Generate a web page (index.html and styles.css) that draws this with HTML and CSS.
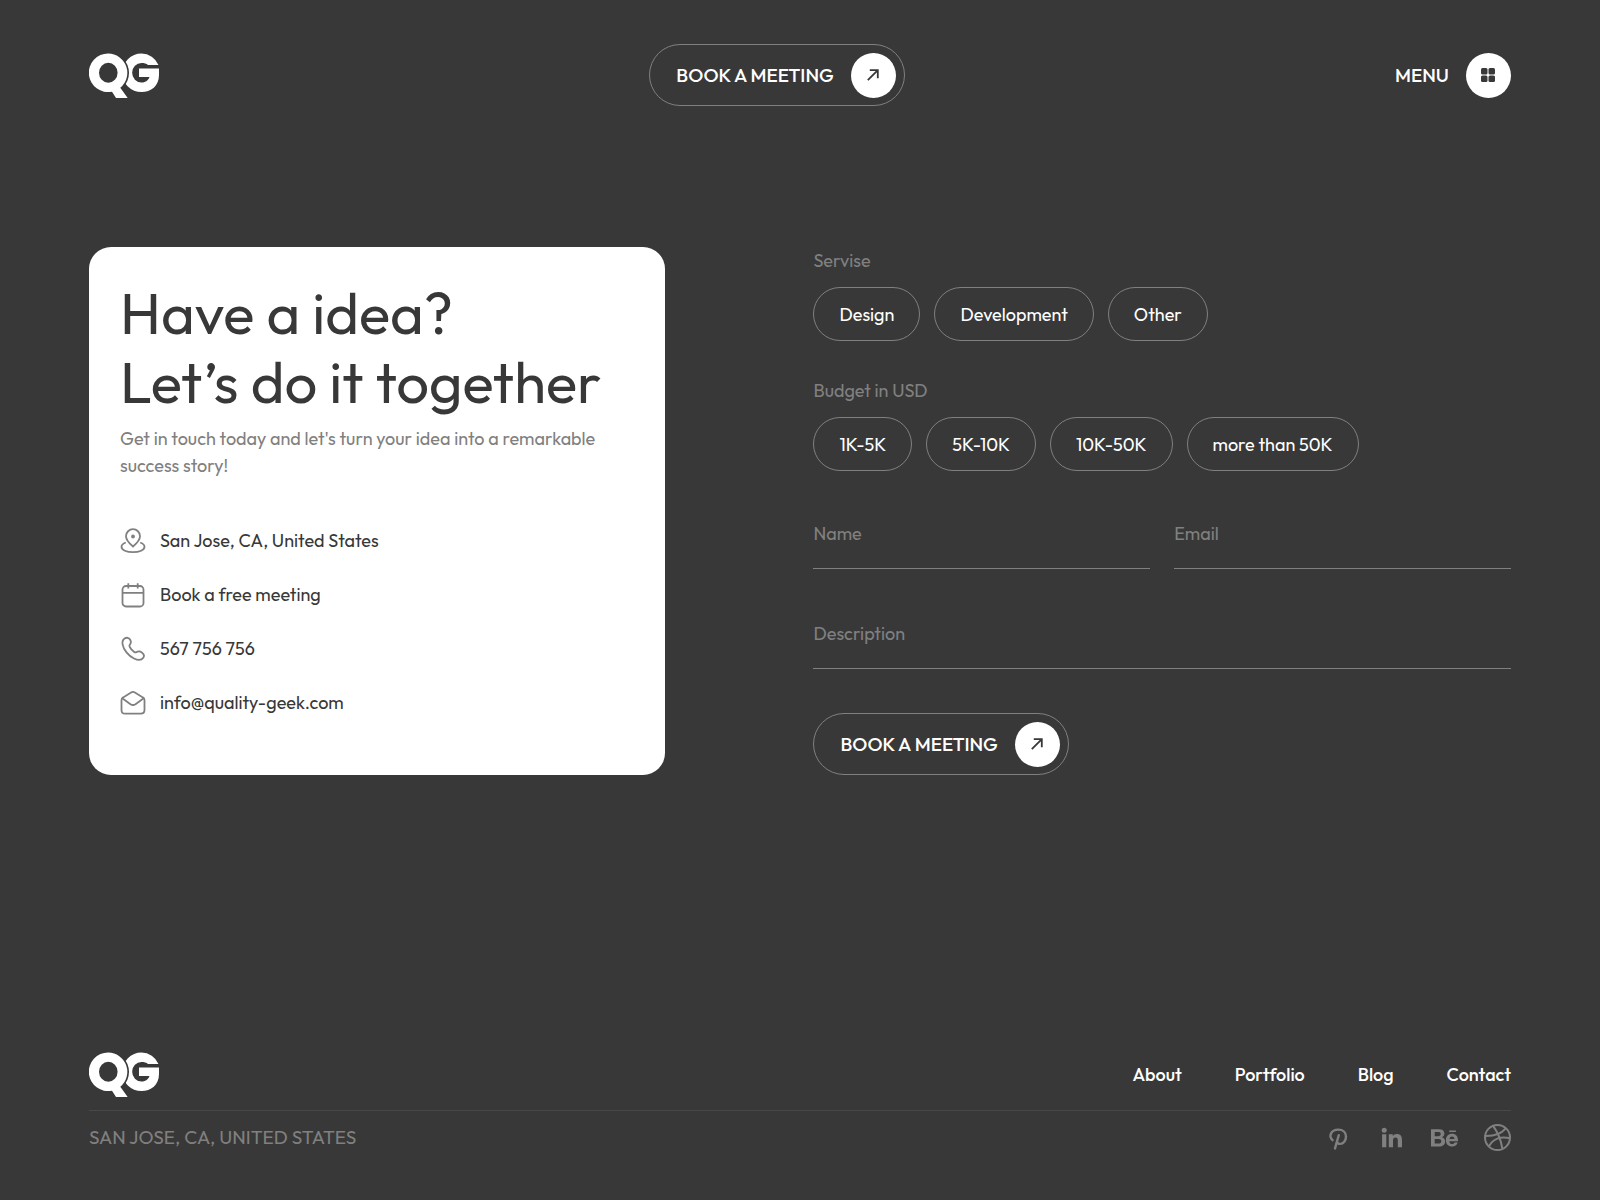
FILE: index.html
```html
<!DOCTYPE html>
<html lang="en">
<head>
<meta charset="utf-8">
<meta name="viewport" content="width=device-width, initial-scale=1">
<title>QG – Contact</title>
<link rel="stylesheet" href="styles.css">
</head>
<body>
<svg class="defs" aria-hidden="true">
  <symbol id="logo" viewBox="0 0 70 45">
    <path fill="#fff" d="M69.500 12A18.600 18.600 0 0 0 52.500.5a19.300 19.300 0 0 0 0 38.600C62 39 70 33 70 22v-6.500H50V24h10.500c-1.500 4-4.500 5.500-8 5.500a9.300 9.700 0 0 1 0-19.500c2.500 0 5 .5 6.500 2z"/>
    <circle cx="19.300" cy="19.800" r="20.700" fill="#383838"/>
    <path fill="#fff" fill-rule="evenodd" d="M19.300.5a19.300 19.300 0 0 1 12 34.200L38.700 45H27l-4-6.300A19.300 19.300 0 1 1 19.300.5zm0 9.300a9.300 10 0 1 0 0 20 9.300 10 0 0 0 0-20z"/>
  </symbol>
  <symbol id="arrow" viewBox="0 0 12 12">
    <path fill="none" stroke="#383838" stroke-width="1.800" d="M.8 11.200 10.600 1.400M2.800 1.200h8v8"/>
  </symbol>
</svg>

<header class="header">
  <a class="logo" href="#" aria-label="QG home"><svg><use href="#logo"/></svg></a>
  <button class="cta" type="button">BOOK A MEETING<span class="disc"><svg class="arrow"><use href="#arrow"/></svg></span></button>
  <button class="menu" type="button">MENU<span class="disc"><svg class="dots" viewBox="0 0 14 14" fill="#383838"><rect width="6.500" height="6.500" rx="1.500"/><rect x="7.500" width="6.500" height="6.500" rx="1.500"/><rect y="7.500" width="6.500" height="6.500" rx="1.500"/><rect x="7.500" y="7.500" width="6.500" height="6.500" rx="1.500"/></svg></span></button>
</header>

<main class="main">
  <section class="card">
    <h1>Have a idea?<br>Let’s do it together</h1>
    <p class="lead">Get in touch today and let's turn your idea into a remarkable success story!</p>
    <ul class="contacts">
      <li><svg viewBox="0 0 26 26"><path d="M13 18.500C9.500 15.500 6 11.800 6 8.200a7 7 0 0 1 14 0c0 3.600-3.500 7.300-7 10.300z"/><circle cx="13" cy="8.500" r="1.900" class="solid"/><path d="M5.800 14.500C3 15.500 1.500 17 1.500 18.800c0 3.200 5.100 5.400 11.500 5.400s11.500-2.200 11.500-5.400c0-1.800-1.500-3.300-4.300-4.300"/></svg><span>San Jose, CA, United States</span></li>
      <li><svg viewBox="0 0 26 26"><rect x="2.500" y="4" width="21" height="20.500" rx="3.500"/><path d="M2.500 10.800h21M8.300 1.200v5.300M17.700 1.200v5.300"/></svg><a href="#book">Book a free meeting</a></li>
      <li><svg viewBox="0 0 26 26"><path d="M4.500 2.600C6.600 1.200 8.900 1.500 10.200 3.700c1.400 2.400.8 3.600-.5 5.100-1 1.100-.4 2 1.500 4.300 2.200 2.500 3.600 4 5 3.200 1.900-1.100 3.500-1.400 5.600.1 2.300 1.600 2.800 3.300 1.500 5.300-1.600 2.400-5 2.900-9.300.8C8.300 19.700 3.500 13.700 2.600 8.400 2.100 5.600 2.600 3.900 4.500 2.600z"/></svg><a href="tel:567756756">567 756 756</a></li>
      <li><svg viewBox="0 0 26 26"><path d="M1.500 10.200c0-1.300.5-2.200 1.600-2.800l8-4.900c1.300-.8 2.500-.8 3.800 0l8 4.900c1.100.6 1.600 1.500 1.600 2.800V20c0 2.500-1.200 3.700-3.700 3.700H5.200c-2.500 0-3.700-1.200-3.700-3.700z"/><path d="m2.300 8.300 8.200 5.900c1.800 1.200 3.200 1.200 5 0l8.200-5.900"/></svg><a href="mailto:info@quality-geek.com">info@quality-geek.com</a></li>
    </ul>
  </section>

  <form class="form" id="book">
    <div class="group" role="group" aria-labelledby="service-label">
      <span class="label" id="service-label">Servise</span>
      <div class="pills">
        <button type="button">Design</button>
        <button type="button">Development</button>
        <button type="button">Other</button>
      </div>
    </div>
    <div class="group" role="group" aria-labelledby="budget-label">
      <span class="label" id="budget-label">Budget in USD</span>
      <div class="pills">
        <button type="button">1K-5K</button>
        <button type="button">5K-10K</button>
        <button type="button">10K-50K</button>
        <button type="button">more than 50K</button>
      </div>
    </div>
    <div class="fields">
      <input type="text" placeholder="Name" aria-label="Name">
      <input type="email" placeholder="Email" aria-label="Email">
      <input class="wide" type="text" placeholder="Description" aria-label="Description">
    </div>
    <button class="cta" type="submit">BOOK A MEETING<span class="disc"><svg class="arrow"><use href="#arrow"/></svg></span></button>
  </form>
</main>

<footer class="footer">
  <div class="footer-top">
    <a class="logo" href="#" aria-label="QG home"><svg><use href="#logo"/></svg></a>
    <nav class="links">
      <a href="#about">About</a>
      <a href="#portfolio">Portfolio</a>
      <a href="#blog">Blog</a>
      <a href="#contact">Contact</a>
    </nav>
  </div>
  <div class="footer-bottom">
    <span class="place">SAN JOSE, CA, UNITED STATES</span>
    <div class="social">
      <a href="#pinterest" aria-label="Pinterest"><svg viewBox="0 0 27 27"><path fill="none" stroke="currentColor" stroke-width="2.400" stroke-linecap="round" d="M7.600 16.200C3.300 12.500 5.800 5.600 13.300 5.600c4.800 0 7.700 2.900 7.700 6.900 0 4.300-2.700 7.400-5.700 7.400-2 0-3.200-1.200-3.300-2.300M13.800 11.200 10 24.400"/></svg></a>
      <a href="#linkedin" aria-label="LinkedIn"><svg viewBox="0 0 27 27" fill="currentColor"><circle cx="6.200" cy="6.200" r="2.500"/><path d="M4.100 10.300h4.200v13H4.100zM10.800 10.300h4v1.800c.8-1.300 2.200-2.100 4.100-2.100 3.700 0 5.100 2.200 5.100 6v7.300h-4.200v-6.700c0-2-.5-3.100-2.200-3.100-1.800 0-2.600 1.200-2.600 3.200v6.600h-4.200z"/></svg></a>
      <a href="#behance" aria-label="Behance"><svg viewBox="0 0 27 27" fill="currentColor" fill-rule="evenodd"><path d="M0 5.200h7.800c3.500 0 5.600 1.400 5.600 4.300 0 1.800-.9 3-2.500 3.700 2.100.6 3.200 2.100 3.200 4.300 0 3.300-2.600 5-6.100 5H0zm3.700 2.900v4.100h3.500c1.600 0 2.500-.7 2.500-2.100s-.9-2-2.500-2zm0 6.800v4.700h3.900c1.700 0 2.700-.8 2.700-2.400s-1-2.300-2.700-2.300zM18.200 6.500h6.700v1.600h-6.700zM27 17.200h-8.700c.1 1.900 1.100 2.800 2.900 2.800 1.300 0 2.100-.6 2.500-1.500h3c-.8 2.700-2.700 4-5.600 4-3.900 0-6.200-2.400-6.200-6.300s2.400-6.400 6.200-6.400c4.100 0 6.100 2.900 5.900 7.400zM18.400 15h5.100c-.3-1.700-1.100-2.500-2.500-2.500-1.500 0-2.400.9-2.600 2.500z"/></svg></a>
      <a href="#dribbble" aria-label="Dribbble"><svg viewBox="0 0 27 27" fill="none" stroke="currentColor" stroke-width="2"><circle cx="13.500" cy="13.500" r="12.500"/><path d="M9 1.900c4.600 6 7.700 13.100 9.300 22.400M1.200 12c8.300.2 15.500-1.500 20.300-7.300M5 22.400C8.700 15 16.500 11.800 25.900 14.300"/></svg></a>
    </div>
  </div>
</footer>
</body>
</html>
```
FILE: styles.css
```css
* { box-sizing: border-box; }

body {
  margin: 0;
  min-height: 100vh;
  display: flex;
  flex-direction: column;
  padding: 44px 89px 49px;
  background: #383838;
  color: #fff;
  font: 400 18px/27px Outfit, Lato, sans-serif;
}

a { color: inherit; text-decoration: none; }
button, input { font: inherit; color: inherit; }
button { background: none; border: 0; cursor: pointer; }
svg { display: block; flex: none; }
.defs { position: absolute; width: 0; height: 0; }

.header {
  display: flex;
  justify-content: space-between;
  align-items: center;
}
.logo svg { width: 70px; height: 45px; }

.cta, .menu {
  display: flex;
  align-items: center;
  gap: 17px;
  font-size: 19px;
  font-weight: 500;
}
.cta {
  height: 62px;
  padding: 0 8px 0 26px;
  border: 1px solid #808080;
  border-radius: 31px;
}
.menu { padding: 0; }
.disc {
  display: grid;
  place-items: center;
  width: 45px;
  height: 45px;
  border-radius: 50%;
  background: #fff;
}
.arrow { width: 12px; height: 12px; }
.dots { width: 14px; height: 14px; }

.main {
  display: grid;
  grid-template-columns: 576fr 697fr;
  gap: 148px;
  margin-top: 141px;
}

.card {
  padding: 31px 31px 58px;
  border-radius: 22px;
  background: #fff;
  color: #383838;
}
h1 {
  margin: 0;
  font-size: 58px;
  font-weight: 400;
  line-height: 69px;
}
.lead { margin: 9px 0 0; color: #808080; }
.contacts {
  display: grid;
  gap: 27px;
  margin: 48px 0 0;
  padding: 0;
  list-style: none;
}
.contacts li { display: flex; align-items: center; gap: 14px; }
.contacts svg {
  width: 26px;
  height: 26px;
  fill: none;
  stroke: #808080;
  stroke-width: 1.8;
}
.contacts .solid { fill: #808080; stroke: none; }

.form {
  display: flex;
  flex-direction: column;
  align-items: flex-start;
}
.group + .group { margin-top: 36px; }
.label { display: block; color: #808080; }
.pills { display: flex; flex-wrap: wrap; gap: 14px; margin-top: 13px; }
.pills button {
  height: 54px;
  padding: 0 25px;
  border: 1px solid #808080;
  border-radius: 27px;
}
.fields {
  display: grid;
  grid-template-columns: 1fr 1fr;
  gap: 30px 24px;
  align-self: stretch;
  margin: 28px 0 44px;
}
.fields input {
  width: 100%;
  height: 70px;
  padding: 0;
  border: 0;
  border-bottom: 1px solid #808080;
  border-radius: 0;
  background: none;
  outline: 0;
}
.fields input::placeholder { color: #808080; opacity: 1; }
.fields .wide { grid-column: 1 / -1; }

.footer { margin-top: auto; }
.footer-top {
  display: flex;
  justify-content: space-between;
  align-items: center;
  padding-bottom: 13px;
  border-bottom: 1px solid #484848;
}
.links { display: flex; gap: 53px; font-weight: 500; }
.footer-bottom {
  display: flex;
  justify-content: space-between;
  align-items: center;
  padding-top: 13px;
  color: #808080;
}
.place { font-size: 19px; }
.social { display: flex; gap: 26px; }
.social svg { width: 27px; height: 27px; }
```
